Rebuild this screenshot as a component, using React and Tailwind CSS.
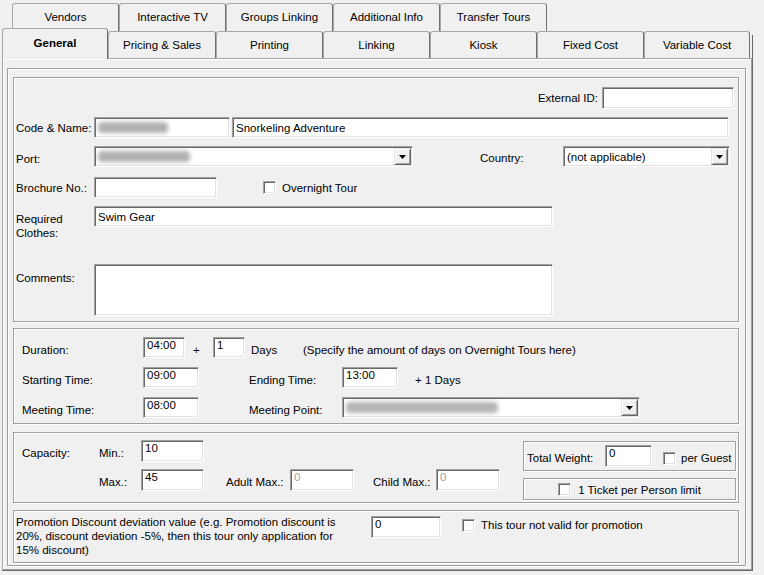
import React from "react";

const sunken =
  "bg-white border border-t-[#a0a0a0] border-l-[#a0a0a0] border-b-white border-r-white shadow-[inset_1px_1px_0_#696969,inset_-1px_-1px_0_#e3e3e3]";
const etched = "border border-[#a0a0a0] shadow-[inset_1px_1px_0_#ffffff,1px_1px_0_#ffffff]";
const tabCls =
  "shrink-0 flex items-center justify-center bg-[#f0f0f0] border border-b-0 border-l-[#a8a8a8] border-t-[#a8a8a8] border-r-[#6e6e6e] rounded-t-[3px] whitespace-nowrap";

function Input({ className = "", children, top = false, grey = false }) {
  return (
    <div
      className={`${sunken} ${className} shrink-0 flex ${
        top ? "items-start pt-[1px]" : "items-center"
      } pl-[3px] leading-[12px] overflow-hidden whitespace-nowrap ${grey ? "text-[#a0a0a0]" : "text-black"}`}
    >
      {children}
    </div>
  );
}

function Combo({ className = "", children }) {
  return (
    <div className={`${sunken} ${className} shrink-0 flex items-stretch p-[1px]`}>
      <div className="flex-1 flex items-center pl-[2px] overflow-hidden whitespace-nowrap leading-[12px]">
        {children}
      </div>
      <div className="w-[17px] shrink-0 bg-[#f0f0f0] border border-t-[#e3e3e3] border-l-[#e3e3e3] border-b-[#696969] border-r-[#696969] shadow-[inset_1px_1px_0_#ffffff,inset_-1px_-1px_0_#a0a0a0] flex items-center justify-center">
        <svg width="7" height="4" viewBox="0 0 7 4">
          <path d="M0 0H7L3.5 4Z" fill="#000" />
        </svg>
      </div>
    </div>
  );
}

function Check() {
  return <div className={`${sunken} w-[13px] h-[13px] shrink-0`} />;
}

export default function App() {
  return (
    <div className="w-[764px] h-[575px] bg-[#f0f0f0] text-[11.5px] leading-[14px] text-black font-['Liberation_Sans',Arial,sans-serif] overflow-hidden">
      {/* Tabs */}
      <div className="pt-[3px]">
        <div className="flex ml-[12px] h-[28px]">
          <div className={`${tabCls} w-[107px] h-[28px] pb-[1px]`}>Vendors</div>
          <div className={`${tabCls} w-[107px] h-[28px] pb-[1px]`}>Interactive TV</div>
          <div className={`${tabCls} w-[107px] h-[28px] pb-[1px]`}>Groups Linking</div>
          <div className={`${tabCls} w-[107px] h-[28px] pb-[1px]`}>Additional Info</div>
          <div className={`${tabCls} w-[107px] h-[28px] pb-[1px]`}>Transfer Tours</div>
        </div>
        <div className="flex ml-[2px] h-[27px]">
          <div className={`${tabCls} relative z-10 w-[106px] h-[31px] -mt-[3px] font-bold pb-[2px]`}>General</div>
          <div className={`${tabCls} w-[108px] h-[27px]`}>Pricing &amp; Sales</div>
          <div className={`${tabCls} w-[107px] h-[27px]`}>Printing</div>
          <div className={`${tabCls} w-[107px] h-[27px]`}>Linking</div>
          <div className={`${tabCls} w-[107px] h-[27px]`}>Kiosk</div>
          <div className={`${tabCls} w-[107px] h-[27px]`}>Fixed Cost</div>
          <div className={`${tabCls} w-[106px] h-[27px]`}>Variable Cost</div>
          <div className="ml-[2px] mt-[4px] w-[1px] h-[23px] bg-[#696969]" />
        </div>
      </div>

      {/* Tab page */}
      <div className="ml-[2px] w-[751px] h-[513px] border border-l-[#a8a8a8] border-t-[#a8a8a8] border-r-[#696969] border-b-[#696969] shadow-[inset_-1px_-1px_0_#a0a0a0,inset_1px_1px_0_#ffffff] pl-[4px] pt-[9px]">
        <div className={`${etched} w-[739px] h-[498px] pl-[5px] pt-[8px]`}>
          {/* Group 1 */}
          <div className={`${etched} w-[726px] h-[245px] pl-[2px]`}>
            <div className="mt-[9px] h-[22px] flex items-center justify-end pr-[4px]">
              <span className="mr-[4px]">External ID:</span>
              <Input className="w-[132px] h-[22px]" />
            </div>
            <div className="mt-[8px] h-[21px] flex items-center">
              <span className="w-[78px] shrink-0">Code &amp; Name:</span>
              <Input className="w-[136px] h-[21px]">
                <div className="h-[11px] w-[70px] bg-[#b0b0b0] blur-[2px] rounded-sm" />
              </Input>
              <Input className="ml-[2px] w-[497px] h-[21px]">Snorkeling Adventure</Input>
            </div>
            <div className="mt-[8px] h-[21px] flex items-center">
              <span className="w-[78px] shrink-0 mt-[5px]">Port:</span>
              <Combo className="w-[319px] h-[21px]">
                <div className="h-[11px] w-[92px] bg-[#b0b0b0] blur-[2px] rounded-sm" />
              </Combo>
              <span className="ml-[67px] w-[83px] shrink-0 mt-[3px]">Country:</span>
              <Combo className="w-[167px] h-[21px]">(not applicable)</Combo>
            </div>
            <div className="mt-[10px] h-[21px] flex items-center">
              <span className="w-[78px] shrink-0">Brochure No.:</span>
              <Input className="w-[123px] h-[21px]" />
              <div className="ml-[46px]">
                <Check />
              </div>
              <span className="ml-[6px]">Overnight Tour</span>
            </div>
            <div className="mt-[8px] h-[21px] flex items-start">
              <span className="w-[78px] shrink-0 pt-[6px] leading-[14px]">
                Required
                <br />
                Clothes:
              </span>
              <Input className="w-[459px] h-[21px]">Swim Gear</Input>
            </div>
            <div className="mt-[37px] h-[52px] flex items-start">
              <span className="w-[78px] shrink-0 pt-[7px]">Comments:</span>
              <Input className="w-[459px] h-[52px]" />
            </div>
          </div>

          {/* Group 2 */}
          <div className={`${etched} mt-[6px] w-[726px] h-[96px] pl-[8px]`}>
            <div className="mt-[8px] h-[21px] flex items-center">
              <span className="w-[121px] shrink-0 mt-[5px]">Duration:</span>
              <Input top className="w-[42px] h-[21px]">04:00</Input>
              <span className="ml-[8px] w-[20px] shrink-0 mt-[5px]">+</span>
              <Input top className="w-[32px] h-[21px]">1</Input>
              <span className="ml-[6px] w-[52px] shrink-0 mt-[5px]">Days</span>
              <span className="mt-[5px] whitespace-nowrap">(Specify the amount of days on Overnight Tours here)</span>
            </div>
            <div className="mt-[9px] h-[21px] flex items-center">
              <span className="w-[121px] shrink-0 mt-[5px]">Starting Time:</span>
              <Input top className="w-[56px] h-[21px]">09:00</Input>
              <span className="ml-[50px] w-[93px] shrink-0 mt-[5px]">Ending Time:</span>
              <Input top className="w-[56px] h-[21px]">13:00</Input>
              <span className="ml-[17px] mt-[5px]">+ 1 Days</span>
            </div>
            <div className="mt-[9px] h-[21px] flex items-center">
              <span className="w-[121px] shrink-0 mt-[5px]">Meeting Time:</span>
              <Input top className="w-[56px] h-[21px]">08:00</Input>
              <span className="ml-[50px] w-[93px] shrink-0 mt-[5px]">Meeting Point:</span>
              <Combo className="w-[298px] h-[21px]">
                <div className="h-[11px] w-[152px] bg-[#b4b4b4] blur-[2px] rounded-sm" />
              </Combo>
            </div>
          </div>

          {/* Group 3 */}
          <div className={`${etched} mt-[8px] w-[726px] h-[71px] flex justify-between`}>
            <div className="pl-[8px]">
              <div className="mt-[7px] h-[22px] flex items-center">
                <span className="w-[77px] shrink-0 mt-[4px]">Capacity:</span>
                <span className="w-[42px] shrink-0 mt-[4px]">Min.:</span>
                <Input top className="w-[63px] h-[22px]">10</Input>
              </div>
              <div className="mt-[7px] h-[22px] flex items-center">
                <span className="w-[77px] shrink-0" />
                <span className="w-[42px] shrink-0 mt-[4px]">Max.:</span>
                <Input top className="w-[63px] h-[22px]">45</Input>
                <span className="ml-[22px] w-[64px] shrink-0 mt-[4px]">Adult Max.:</span>
                <Input top grey className="w-[64px] h-[22px]">0</Input>
                <span className="ml-[19px] w-[63px] shrink-0 mt-[4px]">Child Max.:</span>
                <Input top grey className="w-[64px] h-[22px]">0</Input>
              </div>
            </div>
            <div className="mr-[2px]">
              <div className={`${etched} mt-[8px] w-[213px] h-[30px] flex items-center pl-[3px]`}>
                <span className="w-[78px] shrink-0 mt-[3px]">Total Weight:</span>
                <Input top className="w-[47px] h-[22px]">0</Input>
                <div className="ml-[11px] mt-[4px]">
                  <Check />
                </div>
                <span className="ml-[5px] mt-[3px]">per Guest</span>
              </div>
              <div className={`${etched} mt-[7px] w-[213px] h-[22px] flex items-center justify-center`}>
                <Check />
                <span className="ml-[7px] mt-[1px]">1 Ticket per Person limit</span>
              </div>
            </div>
          </div>

          {/* Group 4 */}
          <div className={`${etched} mt-[7px] w-[726px] h-[53px] flex items-start pl-[2px]`}>
            <div className="w-[355px] shrink-0 mt-[4px] leading-[14px]">
              Promotion Discount deviation value (e.g. Promotion discount is
              <br />
              20%, discount deviation -5%, then this tour only application for
              <br />
              15% discount)
            </div>
            <div className="mt-[5px] flex items-start">
              <Input top className="w-[70px] h-[22px]">0</Input>
              <div className="ml-[21px] mt-[2px] h-[14px] flex items-center">
                <Check />
                <span className="ml-[6px]">This tour not valid for promotion</span>
              </div>
            </div>
          </div>
        </div>
      </div>
    </div>
  );
}
